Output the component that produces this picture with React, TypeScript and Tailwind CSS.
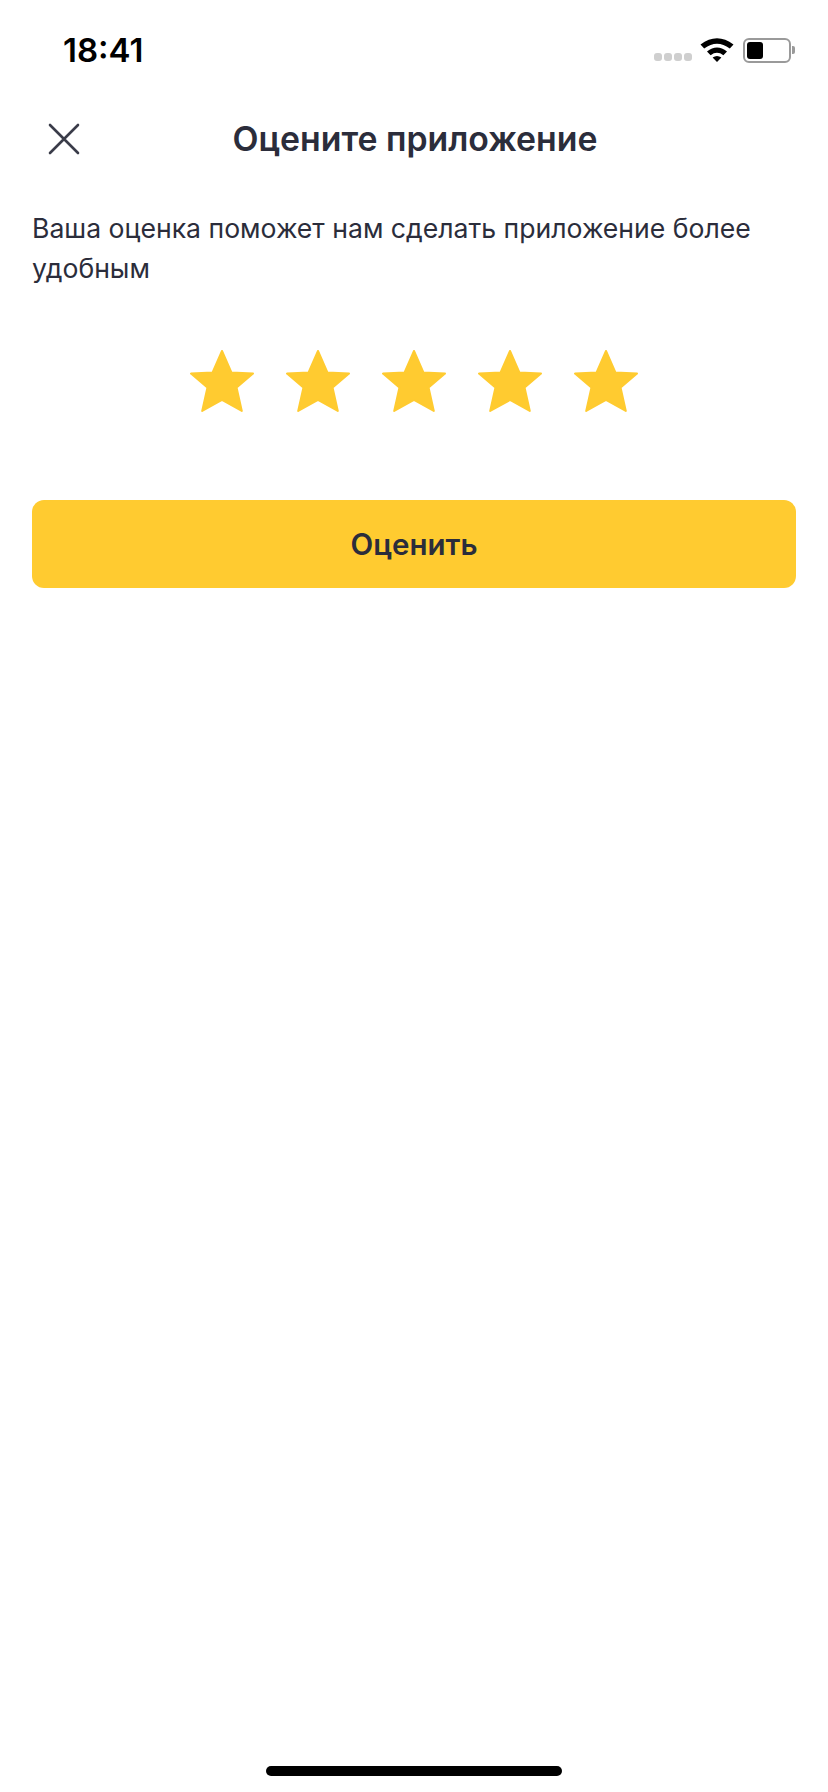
import React from "react";

const font = { fontFamily: "Inter, 'Noto Sans', sans-serif" };

function Star() {
  return (
    <svg width="64" height="62" viewBox="0 0 64 62" className="block">
      <path
        d="M32 1 L41.4 22.4 L63 23.6 L46.6 37.6 L51.8 61 L32 50 L12.2 61 L17.4 37.6 L1 23.6 L22.6 22.4 Z"
        fill="#FFCB30"
        stroke="#FFCB30"
        strokeWidth="2"
        strokeLinejoin="round"
      />
    </svg>
  );
}

function StatusIcons() {
  return (
    <div className="flex items-center">
      <div className="flex items-center gap-[2px] mt-[13px] mr-[8px]">
        {[0, 1, 2, 3].map((i) => (
          <span key={i} className="w-[8px] h-[8px] rounded-[3px] bg-[#cfcfcf]" />
        ))}
      </div>
      <svg width="34" height="26" viewBox="0 0 34 26" className="mr-[9px] mb-[2px]">
        <path d="M0.5 8.5 Q17 -4 33.5 8.5 L29.8 12.4 Q17 3 4.2 12.4 Z" fill="#000" />
        <path d="M7 15.5 Q17 7.5 27 15.5 L23.4 19.2 Q17 14.5 10.6 19.2 Z" fill="#000" />
        <path d="M12.6 21.5 Q17 18.5 21.4 21.5 L17 26 Z" fill="#000" />
      </svg>
      <div className="flex items-center">
        <div className="w-[48px] h-[25px] rounded-[6px] border-2 border-[#9a9a9a] p-[2px] flex">
          <div className="w-[16px] h-full rounded-[3px] bg-black" />
        </div>
        <div className="w-[3px] h-[8px] rounded-r-[2px] bg-[#9a9a9a] ml-[1px]" />
      </div>
    </div>
  );
}

export default function App() {
  return (
    <div className="w-[828px] h-[1792px] bg-white flex flex-col relative" style={font}>
      {/* Status bar */}
      <div className="h-[100px] pl-[63px] pr-[33px] pt-[30px] flex justify-between items-start">
        <span className="text-[33px] leading-[40px] font-semibold text-black">18:41</span>
        <div className="pt-[6px]">
          <StatusIcons />
        </div>
      </div>

      {/* Header */}
      <div className="relative h-[78px] flex items-center justify-center">
        <button className="absolute left-[48px] top-[23px]" aria-label="Close">
          <svg width="32" height="32" viewBox="0 0 32 32" className="block">
            <path
              d="M2 2 L30 30 M30 2 L2 30"
              stroke="#3A3C49"
              strokeWidth="2.6"
              strokeLinecap="round"
              fill="none"
            />
          </svg>
        </button>
        <h1 className="text-[33.8px] leading-[44px] font-semibold text-[#2B2D3B] pl-[2px]">
          Оцените приложение
        </h1>
      </div>

      {/* Body */}
      <div className="px-[32px] pt-[30px]">
        <p className="text-[26.6px] leading-[40px] text-[#2B2D3B]">
          Ваша оценка поможет нам сделать приложение более удобным
        </p>
        <div className="flex justify-center gap-[32px] mt-[62px]">
          <Star />
          <Star />
          <Star />
          <Star />
          <Star />
        </div>
        <button className="w-full h-[88px] mt-[88px] rounded-[12px] bg-[#FFCB30] text-[29.5px] font-semibold text-[#2B2D3B]">
          Оценить
        </button>
      </div>

      {/* Home indicator */}
      <div className="absolute bottom-[16px] left-[266px] w-[296px] h-[10px] rounded-full bg-black" />
    </div>
  );
}
